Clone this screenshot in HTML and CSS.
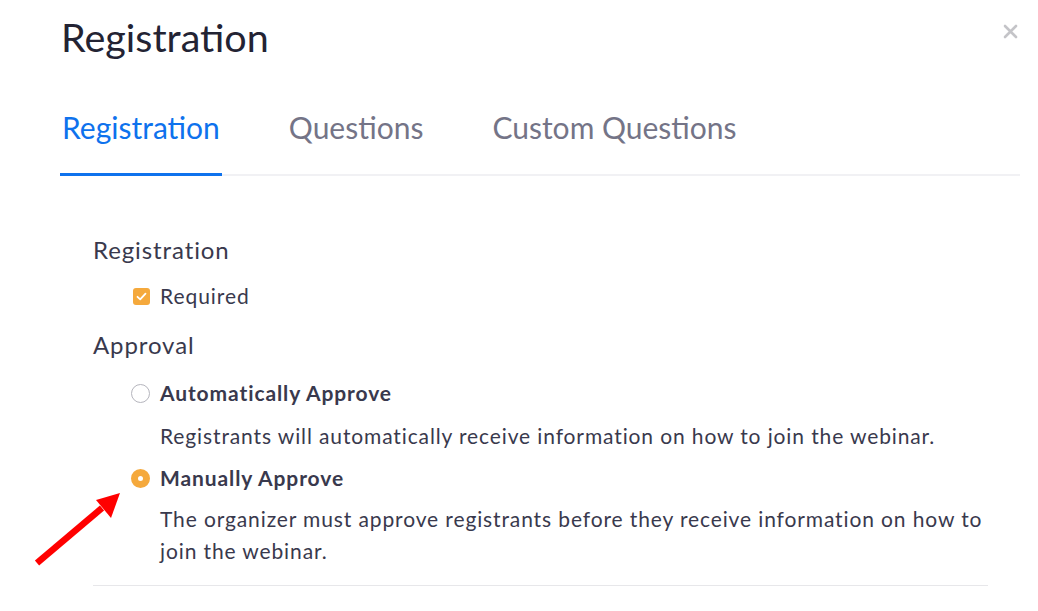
FILE: index.html
```html
<!DOCTYPE html>
<html lang="en">
<head>
  <meta charset="UTF-8" />
  <meta name="viewport" content="width=device-width, initial-scale=1" />
  <title>Registration</title>
  <link rel="stylesheet" href="styles.css">
</head>
<body>
  <div class="dialog">
    <div class="dialog-header">
      <h1 class="dialog-title">Registration</h1>
      <button class="close-btn" aria-label="Close">
        <svg width="15" height="15" viewBox="0 0 15 15">
          <path d="M2 2 L13 13 M13 2 L2 13" stroke="#c4c4c8" stroke-width="2.6" stroke-linecap="round" />
        </svg>
      </button>
    </div>

    <div class="tabs">
      <div class="tab active">Registration</div>
      <div class="tab">Questions</div>
      <div class="tab">Custom Questions</div>
    </div>

    <div class="content">
      <div class="section-title">Registration</div>
      <label class="check-row">
        <span class="checkbox">
          <svg width="11" height="9" viewBox="0 0 11 9">
            <path d="M1.5 4.8 L4.2 7.3 L9.5 1.6" fill="none" stroke="#fff" stroke-width="1.8" stroke-linecap="round" stroke-linejoin="round" />
          </svg>
        </span>
        Required
      </label>

      <div class="section-title approval">Approval</div>
      <label class="radio-row">
        <span class="radio"></span>
        Automatically Approve
      </label>
      <p class="desc">Registrants will automatically receive information on how to join the webinar.</p>

      <label class="radio-row manual">
        <span class="radio checked"></span>
        Manually Approve
      </label>
      <p class="desc two-line">The organizer must approve registrants before they receive information on how to join the webinar.</p>

      <div class="divider"></div>
    </div>

    <!-- annotation arrow -->
    <svg class="arrow" width="100" height="90" viewBox="0 0 100 90">
      <path d="M7 83 L72 28" stroke="#ff0000" stroke-width="6.5" />
      <polygon points="90,13 66,20 81,38" fill="#ff0000" />
    </svg>
  </div>
</body>
</html>
```

FILE: styles.css
```css
body {
  margin: 0;
  font-family: Lato, "Open Sans", sans-serif;
  color: #39394d;
  background: #fff;
}
.dialog {
  position: relative;
  width: 1038px;
  height: 611px;
  padding: 0 18px 0 60px;
  box-sizing: border-box;
}
.dialog-header {
  display: flex;
  justify-content: space-between;
  align-items: flex-start;
  padding-top: 15px;
}
.dialog-title {
  margin: 0 0 0 1px;
  font-size: 39.5px;
  line-height: 44px;
  font-weight: 400;
  color: #232333;
}
.close-btn {
  margin-top: 9px;
  padding: 0;
  border: none;
  background: none;
  width: 15px;
  height: 15px;
  margin-right: 2px;
}
.tabs {
  display: flex;
  gap: 65px;
  margin-top: 50px;
  border-bottom: 2px solid #f1f1f4;
}
.tab {
  font-size: 30px;
  line-height: 36px;
  color: #747487;
  padding: 0 2px 28px;
  border-bottom: 3px solid transparent;
  margin-bottom: -2px;
}
.tab.active {
  color: #0e72ed;
  border-bottom-color: #0e72ed;
}
.content {
  padding: 0 32px 0 33px;
}
.section-title {
  margin-top: 59px;
  font-size: 24px;
  line-height: 30px;
  letter-spacing: 0.9px;
}
.section-title.approval {
  margin-top: 19px;
}
.check-row,
.radio-row {
  display: flex;
  align-items: center;
  gap: 10px;
  font-size: 21px;
  line-height: 30px;
  letter-spacing: 0.95px;
}
.check-row {
  margin: 16px 0 0 40px;
}
.checkbox {
  width: 17px;
  height: 17px;
  border-radius: 3px;
  background: #f5a93c;
  display: flex;
  align-items: center;
  justify-content: center;
}
.radio-row {
  margin: 18px 0 0 38px;
  font-weight: 700;
  letter-spacing: 0.9px;
}
.radio-row.manual {
  margin-top: 11px;
}
.radio {
  width: 19px;
  height: 19px;
  border-radius: 50%;
  border: 1px solid #b5b5bd;
  box-sizing: border-box;
}
.radio.checked {
  border: 7px solid #f5a93c;
  background: #fff;
}
.desc {
  margin: 12px -20px 0 67px;
  font-size: 21px;
  line-height: 32px;
  letter-spacing: 0.88px;
}
.desc.two-line {
  margin-top: 10px;
}
.divider {
  margin-top: 18px;
  border-top: 1px solid #e7e7ea;
}
.arrow {
  position: absolute;
  left: 30px;
  top: 480px;
}
```
